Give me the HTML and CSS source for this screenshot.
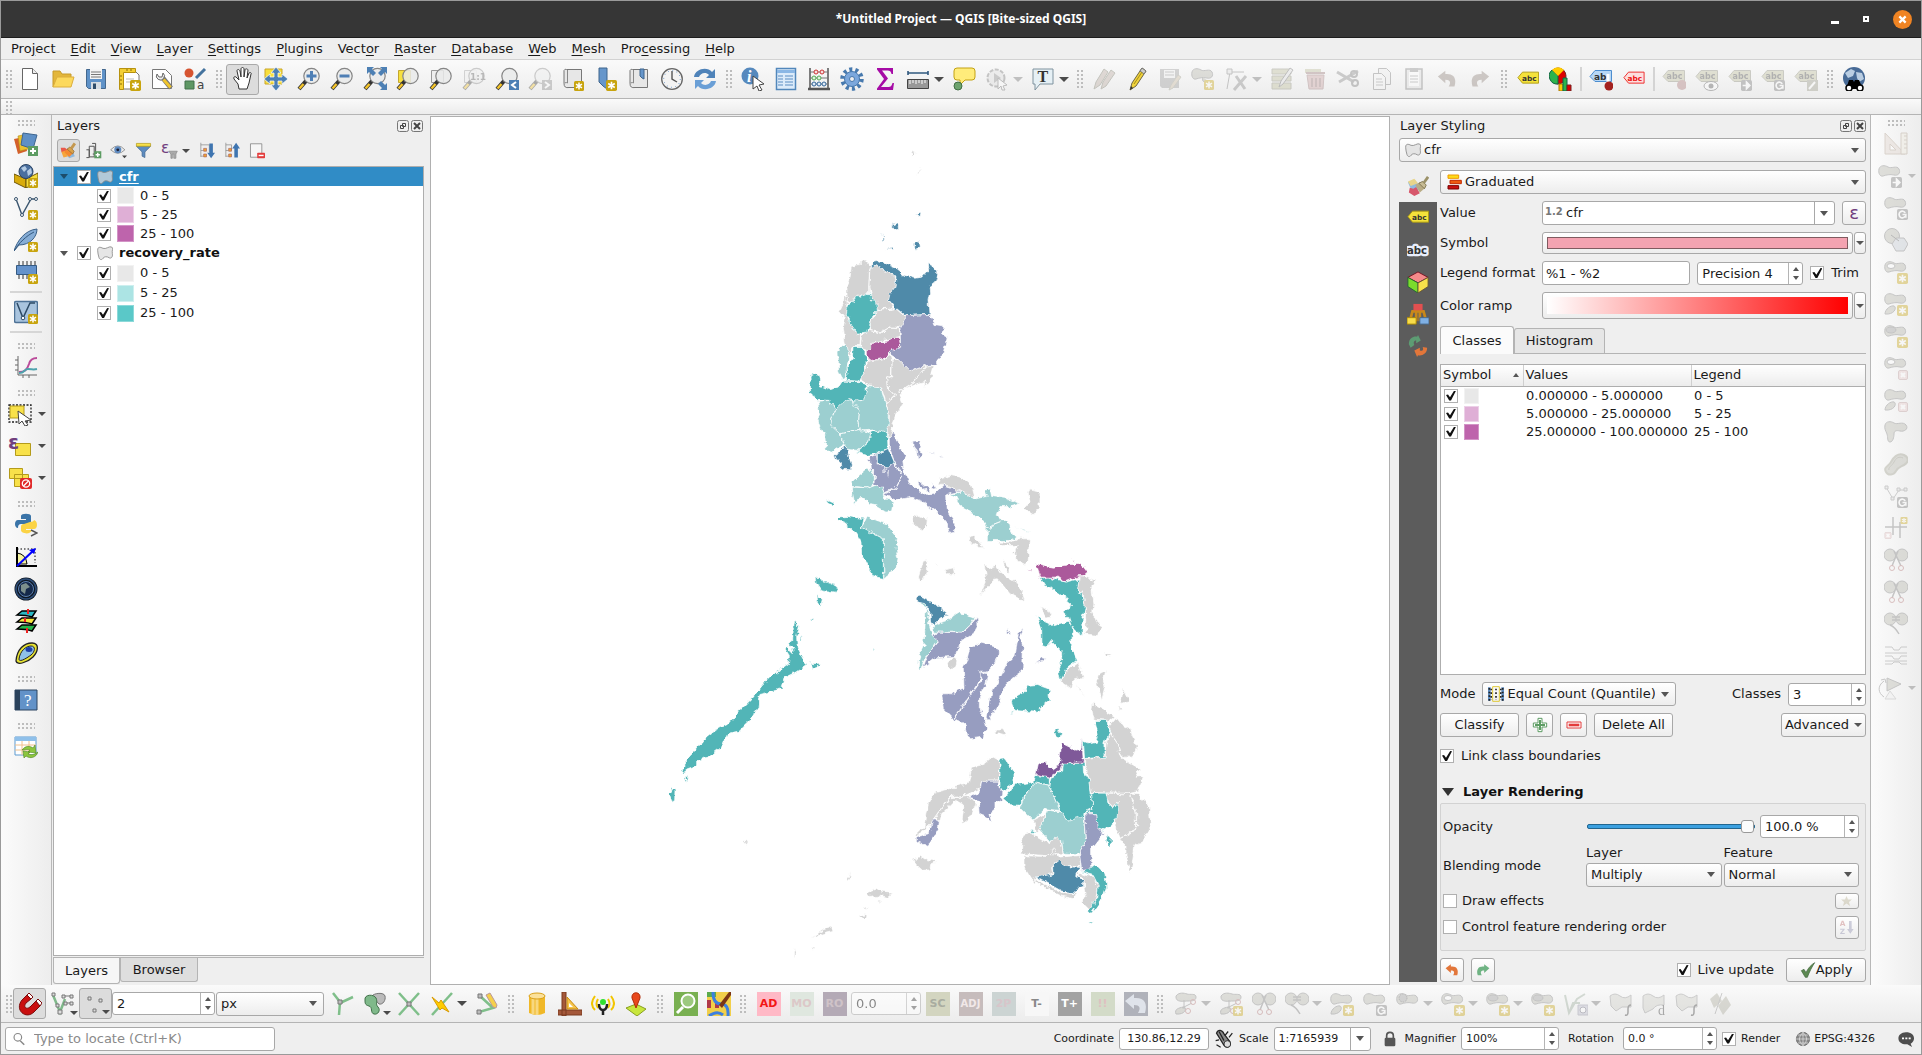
FILE: index.html
```html
<!DOCTYPE html>
<html lang="en">
<head>
<meta charset="utf-8">
<title>*Untitled Project — QGIS [Bite-sized QGIS]</title>
<link rel="stylesheet" href="styles.css">
</head>
<body>
<svg class="sprite" aria-hidden="true">
<symbol id="badge" viewBox="0 0 10 10"><rect width="10" height="10" rx="1.5" fill="#c8a40e"/><path d="M5 1.5v7M2 3.2l6 3.6M8 3.2L2 6.8" stroke="#fff" stroke-width="1.5"/></symbol>
<symbol id="gbadge" viewBox="0 0 10 10"><rect width="10" height="10" rx="1.5" fill="#777"/><path d="M1.500 5h5M5 2l3 3-3 3z" stroke="#fff" stroke-width="1.500" fill="#fff"/></symbol>
<symbol id="rbadge" viewBox="0 0 10 10"><rect width="10" height="10" rx="1.5" fill="#777"/><path d="M7.500 6.500A3 3 0 1 1 7.500 3.500M5 5h3v3" stroke="#fff" stroke-width="1.5" fill="none"/></symbol>
<symbol id="xbadge" viewBox="0 0 10 10"><rect x=".5" y=".5" width="9" height="9" rx="1.5" fill="#e8c9c9" stroke="#b99"/><path d="M3 3l4 4M7 3L3 7" stroke="#fff" stroke-width="2"/></symbol>
<symbol id="new" viewBox="0 0 24 24"><path d="M4.500 1.500h10l5 5v16h-15z" fill="#fff" stroke="#666"/><path d="M14.500 1.500v5h5" fill="#eee" stroke="#666"/></symbol>
<symbol id="open" viewBox="0 0 24 24"><path d="M2 20V4h7l2 3h9v4" fill="#e3b63a" stroke="#c79a2b"/><path d="M2 20L6 10h17l-3 10z" fill="#fcd95d" stroke="#dcae3c"/></symbol>
<symbol id="save" viewBox="0 0 24 24"><path d="M2.500 2.500h19v19h-17l-2-2z" fill="#5f92c8" stroke="#44688e"/><path d="M6 2h12v10H6z" fill="#f4f4f4"/><path d="M7 5h10M7 7.500h10M7 10h10" stroke="#777"/><path d="M7 15h10v7H7z" fill="#d7dde3"/><path d="M9 16.500h3V22H9z" fill="#2f4d6b"/></symbol>
<symbol id="layout" viewBox="0 0 24 24"><path d="M5 3h12l5 5v14H5z" fill="#fff" stroke="#777"/><path d="M2.500 1.500h16v4h-12v17h-4z" fill="#f3cf35" stroke="#b7920f"/><path d="M3 9h2M3 13h2M3 17h2M10 2v2M14 2v2" stroke="#8a6c08"/><path d="M9 12h8M9 15h5" stroke="#bbb"/><use href="#badge" x="13" y="13" width="11" height="11"/></symbol>
<symbol id="manager" viewBox="0 0 24 24"><path d="M2.500 2.500h13l6 6v13h-19z" fill="#fff" stroke="#777"/><path d="M12 10l9 11" stroke="#777" stroke-width="5"/><path d="M13.500 12.500l7 8" stroke="#f0c52d" stroke-width="3"/><path d="M7 7a4 4 0 1 0 6-1l-1 4-3 0z" fill="#eee" stroke="#666"/></symbol>
<symbol id="style" viewBox="0 0 24 24"><circle cx="6" cy="6" r="4.500" fill="#d65431"/><path d="M13 11L22 2" stroke="#44739e" stroke-width="3"/><path d="M2 14h9v8H2z" fill="#5f9764" stroke="#43704a"/><text x="14" y="22" font-family="DejaVu Sans" font-size="12" fill="#444">a</text></symbol>
<symbol id="hand" viewBox="0 0 24 24"><path d="M8 22l-1-5-4-5c-1-2 1-3 2-2l3 3L6 4c0-2 2-2 3 0l1 6V2c0-2 3-2 3 0v8l1-7c0-2 3-1 3 0l-1 8 2-5c1-1 3 0 2 1l-2 9-2 6z" fill="#fff" stroke="#333"/></symbol>
<symbol id="pan" viewBox="0 0 24 24"><path d="M1 2h17v15H1z" fill="#f8df3d" stroke="#c8a62a"/><path d="M12 0l5 6h-3v4h4V7l6 5-6 5v-3h-4v4h3l-5 6-5-6h3v-4H6v3l-6-5 6-5v3h4V6H7z" fill="#4d80b4" stroke="#fff" stroke-width=".7"/></symbol>
<symbol id="mag" viewBox="0 0 24 24"><path d="M9 14L2 22" stroke="#333" stroke-width="4"/><path d="M6.500 17l-4 4.500" stroke="#f5c52a" stroke-width="2.500"/><circle cx="14.500" cy="9" r="7.700" fill="#e9eaea" fill-opacity=".85" stroke="#858585" stroke-width="1.200"/></symbol>
<symbol id="zin" viewBox="0 0 24 24"><use href="#mag"/><path d="M14.500 4v10M9.500 9h10" stroke="#4e7fb5" stroke-width="3"/></symbol>
<symbol id="zout" viewBox="0 0 24 24"><use href="#mag"/><path d="M9.500 9h10" stroke="#4e7fb5" stroke-width="3"/></symbol>
<symbol id="zfull" viewBox="0 0 24 24"><use href="#mag"/><path d="M4 0h7L9 2l4 4-3 3-4-4-2 2zM24 0v7l-2-2-4 4-3-3 4-4-2-2zM24 23h-7l2-2-4-4 3-3 4 4 2-2z" fill="#4d80b4"/></symbol>
<symbol id="zsel" viewBox="0 0 24 24"><path d="M2.500 3.500h12v12h-12z" fill="#f7e13e" stroke="#c4a72e"/><use href="#mag"/></symbol>
<symbol id="zlay" viewBox="0 0 24 24"><path d="M2.500 3.500h12v12h-12z" fill="#eee" stroke="#999"/><use href="#mag"/></symbol>
<symbol id="znat" viewBox="0 0 24 24"><path d="M2.500 3.500h12v12h-12z" fill="#eee" stroke="#999"/><use href="#mag"/><text x="8" y="13" font-family="DejaVu Sans" font-weight="bold" font-size="9" fill="#555">1:1</text></symbol>
<symbol id="zlast" viewBox="0 0 24 24"><use href="#mag"/><path d="M14 13h10v10H14z" fill="#4a7eb4"/><path d="M21 15l-4 3 4 3" stroke="#fff" stroke-width="2" fill="none"/></symbol>
<symbol id="znext" viewBox="0 0 24 24"><use href="#mag"/><path d="M14 13h10v10H14z" fill="#888"/><path d="M17 15l4 3-4 3" stroke="#fff" stroke-width="2" fill="none"/></symbol>
<symbol id="view" viewBox="0 0 24 24"><path d="M5.500 2.500h15v18H8q-5 1-5-4V3.500q1-2 2.500-1z" fill="#e7e7e7" stroke="#777"/><path d="M6.500 3v13q-1-1-3 0" stroke="#888" fill="none"/></symbol>
<symbol id="mapview" viewBox="0 0 24 24"><use href="#view"/><use href="#badge" x="13" y="14" width="10" height="10"/></symbol>
<symbol id="bookmark" viewBox="0 0 24 24"><path d="M5 1h8v21l-4-3-4-4z" fill="#6696cb" stroke="#3e658c"/><use href="#badge" x="12" y="13" width="11" height="11"/></symbol>
<symbol id="bookmarks" viewBox="0 0 24 24"><use href="#view"/><path d="M13 2h4v10l-2-1-2-2z" fill="#6696cb" stroke="#3e658c"/></symbol>
<symbol id="clock" viewBox="0 0 24 24"><circle cx="12" cy="12" r="10.300" fill="#f3f3f3" stroke="#666" stroke-width="1.300"/><path d="M12 4v8l5 3" fill="none" stroke="#555" stroke-width="1.400"/><circle cx="12" cy="12" r="8.300" fill="none" stroke="#6696cb" stroke-dasharray="1 3.340"/></symbol>
<symbol id="refresh" viewBox="0 0 24 24"><path d="M1 10c1-8 13-11 18-5l3-3v9h-9l3-3c-4-4-9-1-10 2z" fill="#4f83b9"/><path d="M23 14c-1 8-13 11-18 5l-3 3v-9h9l-3 3c4 4 9 1 10-2z" fill="#6a9fd6"/></symbol>
<symbol id="info" viewBox="0 0 24 24"><circle cx="9" cy="9" r="8.500" fill="#5689bd"/><text x="6" y="15" font-family="Liberation Serif" font-style="italic" font-weight="bold" font-size="16" fill="#fff">i</text><path d="M12 9l11 8-5 1 3 5-3 1-2-5-4 3z" fill="#fff" stroke="#444"/></symbol>
<symbol id="table" viewBox="0 0 24 24"><path d="M2.500 1.500h19v21h-19z" fill="#dcebfa" stroke="#5287bb" stroke-width="1.500"/><path d="M3 3h18v3H3z" fill="#8bb7e5"/><path d="M4 9h5M11 9h8M4 12h5M11 12h8M4 15h5M11 15h8M4 18h5M11 18h8" stroke="#5b8dc2"/></symbol>
<symbol id="abacus" viewBox="0 0 24 24"><path d="M3 1v21M21 1v21" stroke="#555" stroke-width="1.500"/><path d="M1 22h22" stroke="#555" stroke-width="2.500"/><path d="M3 5h18M3 11h18M3 17h18" stroke="#777"/><g fill="#f6dfdf" stroke="#c33"><circle cx="9" cy="5" r="2"/><circle cx="15" cy="5" r="2"/></g><g fill="#dff3df" stroke="#5a5"><circle cx="7" cy="11" r="2"/><circle cx="12" cy="11" r="2"/></g><g fill="#dfeaf6" stroke="#369"><circle cx="7" cy="17" r="2"/><circle cx="12" cy="17" r="2"/><circle cx="17" cy="17" r="2"/></g></symbol>
<symbol id="gear" viewBox="0 0 24 24"><circle cx="12" cy="12" r="9.500" fill="none" stroke="#4779ae" stroke-width="4.500" stroke-dasharray="3 2.970"/><circle cx="12" cy="12" r="7.500" fill="#7ba7dc" stroke="#4779ae"/><circle cx="12" cy="12" r="2.500" fill="#eee" stroke="#4779ae"/></symbol>
<symbol id="sigma" viewBox="0 0 24 24"><path d="M4 1h16v6h-1.500c-.5-2.500-1.500-3.500-4-3.500H9l6 8-7 8.500h7c3 0 3.500-1 4.500-4H21l-1 7H4v-1.500l7-9.500-7-9.500z" fill="#a60ba6"/></symbol>
<symbol id="measure" viewBox="0 0 24 24"><path d="M2 6h20M2 4v4M22 4v4" stroke="#31597f" stroke-width="1.600"/><path d="M1.500 12.500h21v9h-21z" fill="#999" stroke="#444"/><path d="M4 13v4M7 13v3M10 13v4M13 13v3M16 13v4M19 13v3" stroke="#fff"/></symbol>
<symbol id="tip" viewBox="0 0 24 24"><path d="M5 1h15q3 0 3 3v6q0 3-3 3h-7l-5 5v-5H5q-3 0-3-3V4q0-3 3-3z" fill="#ffec7b" stroke="#c3a112"/><circle cx="6" cy="19" r="4" fill="#6da36e" stroke="#416f44"/></symbol>
<symbol id="action" viewBox="0 0 24 24"><circle cx="11" cy="11" r="8.500" fill="#ddd" stroke="#777" stroke-width="2" stroke-dasharray="4 1.500"/><path d="M9 6l7 5-7 5z" fill="#888"/><path d="M13 11l9 7-4 1 2 4-3 0-1-4-3 3z" fill="#fff" stroke="#666"/></symbol>
<symbol id="textnote" viewBox="0 0 24 24"><path d="M2 2h20v15h-13l-5 6v-6H2z" fill="#e6f0f5" stroke="#7e929e"/><text x="6.500" y="15" font-family="Liberation Serif" font-weight="bold" font-size="16" fill="#333">T</text></symbol>
<symbol id="pencil" viewBox="0 0 24 24"><path d="M5 23l2-7L17 1l4 3L11 19z" fill="#f0d33c" stroke="#6d6545"/><path d="M17 1l4 3-2 3-4-3z" fill="#ccc" stroke="#777"/><path d="M5 23l1-4 2 2z" fill="#333"/><path d="M9 17l8-12" stroke="#a68d16"/></symbol>
<symbol id="pencils" viewBox="0 0 24 24"><path d="M2 22l2-7L12 2l4 3L8 18z" fill="#b9a99f" stroke="#776"/><path d="M9 22l2-7 8-12 4 3-9 13z" fill="#b9a99f" stroke="#776"/></symbol>
<symbol id="saveed" viewBox="0 0 24 24"><path d="M2 2h19v19H4l-2-2z" fill="#999"/><path d="M6 3h11v8H6z" fill="#eee"/><path d="M7 5h9M7 8h9" stroke="#888"/><path d="M11 23l2-5 7-10 3 2-8 11z" fill="#c9b9a0" stroke="#998"/></symbol>
<symbol id="blob" viewBox="0 0 24 24"><path d="M1 5c1-4 6-4 9-2s9-2 11 2-1 7-5 6-8 0-11 1-5-3-4-7z" fill="#b5b5aa" stroke="#777"/></symbol>
<symbol id="addpoly" viewBox="0 0 24 24"><use href="#blob"/><path d="M12 10c-2 4 2 7 5 4" fill="#b5b5aa" stroke="#777"/><use href="#badge" x="13" y="13" width="10" height="10"/></symbol>
<symbol id="vertex" viewBox="0 0 24 24"><path d="M3 22L6 5h14" fill="none" stroke="#777"/><path d="M3 2h5v5H3z" fill="#ddd" stroke="#777"/><path d="M10 23L22 9M12 9l9 13" stroke="#888" stroke-width="3"/></symbol>
<symbol id="modify" viewBox="0 0 24 24"><path d="M2 2h19v5H2zM2 9h19v5H2zM2 16h19v6H2z" fill="#bcbc98" stroke="#887"/><path d="M9 20l2-6L20 1l3 2L13 17z" fill="#ddd" stroke="#666"/></symbol>
<symbol id="trash" viewBox="0 0 24 24"><path d="M2 2h16v4H2z" fill="#bcbc98"/><path d="M4 8h17l-1 14H6z" fill="#c9a0a0" stroke="#977"/><path d="M3 6h19M9 11v9M13 11v9M17 11v9" stroke="#977" stroke-width="2"/></symbol>
<symbol id="cut" viewBox="0 0 24 24"><path d="M1 5l17 10M3 15L22 4" stroke="#888" stroke-width="3"/><circle cx="19" cy="16" r="3" fill="none" stroke="#777" stroke-width="2"/><circle cx="18" cy="7" r="3" fill="none" stroke="#777" stroke-width="2"/></symbol>
<symbol id="copy" viewBox="0 0 24 24"><path d="M9.500 1.500h8l4 4v12h-12z" fill="#eee" stroke="#777"/><path d="M4.500 6.500h8l4 4v12h-12z" fill="#f4f4f4" stroke="#777"/><path d="M7 12h6M7 15h7M7 18h7" stroke="#888"/></symbol>
<symbol id="paste" viewBox="0 0 24 24"><path d="M4 2h16v20H4z" fill="#ddd" stroke="#777" stroke-width="1.500"/><path d="M7 5h10v14H7z" fill="#fff"/><path d="M8 1h8v4H8z" fill="#888"/><path d="M8 9h8M8 12h8M8 15h8" stroke="#888"/></symbol>
<symbol id="undo" viewBox="0 0 24 24"><path d="M1 9l9-7v4c10-1 14 5 11 15h-7c3-5 2-8-4-8v4z" fill="currentColor"/></symbol>
<symbol id="redo" viewBox="0 0 24 24"><path d="M23 9l-9-7v4C4 5 0 11 3 21h7c-3-5-2-8 4-8v4z" fill="currentColor"/></symbol>
<symbol id="label" viewBox="0 0 24 24"><path d="M6 4.500h17.500v12H6l-5-6z" fill="#f4e23b" stroke="#ae9a10"/><text x="5.500" y="14" font-family="DejaVu Sans" font-weight="bold" font-size="8" fill="#333">abc</text></symbol>
<symbol id="labelg" viewBox="0 0 24 24"><path d="M6 3.500h16.500v11H6l-5-5z" fill="#bcbc98" stroke="#887"/><text x="4.500" y="12" font-family="DejaVu Sans" font-weight="bold" font-size="8" fill="#444">abc</text></symbol>
<symbol id="pie" viewBox="0 0 24 24"><circle cx="9" cy="9" r="8" fill="#d00" stroke="#722"/><path d="M9 9L3 3a8 8 0 0 0 6 14z" fill="#2cb34d" stroke="#164"/><path d="M9 9L3 3a8 8 0 0 1 12 0z" fill="#fc0"/><path d="M10 17h4v7h-4z" fill="#fc0" stroke="#a70"/><path d="M14 11h4v13h-4z" fill="#2cb34d" stroke="#164"/><path d="M18 18h4v6h-4z" fill="#d00" stroke="#722"/></symbol>
<symbol id="labelpin" viewBox="0 0 24 24"><path d="M6 3.500h16.500v11H6l-5-5z" fill="#b7d7f5" stroke="#4d8dcf"/><text x="5" y="13" font-family="DejaVu Sans" font-weight="bold" font-size="9" fill="#333">ab</text><path d="M19 7v9" stroke="#fff" stroke-width="3"/><circle cx="20" cy="19" r="4.500" fill="#a3211f"/></symbol>
<symbol id="labelred" viewBox="0 0 24 24"><path d="M6 4.500h17v12H6l-5-6z" fill="#fcdede" stroke="#e22"/><text x="5" y="14" font-family="DejaVu Sans" font-weight="bold" font-size="8" fill="#e11">abc</text></symbol>
<symbol id="lg1" viewBox="0 0 24 24"><use href="#labelg"/><circle cx="20" cy="18" r="5" fill="#a77"/></symbol>
<symbol id="lg2" viewBox="0 0 24 24"><use href="#labelg"/><ellipse cx="16" cy="19" rx="7" ry="4.500" fill="#fff" stroke="#555"/><circle cx="16" cy="19" r="2.500" fill="#555"/></symbol>
<symbol id="lg3" viewBox="0 0 24 24"><use href="#labelg"/><use href="#gbadge" x="13" y="13" width="11" height="11"/></symbol>
<symbol id="lg4" viewBox="0 0 24 24"><use href="#labelg"/><use href="#rbadge" x="13" y="13" width="11" height="11"/></symbol>
<symbol id="lg5" viewBox="0 0 24 24"><use href="#labelg"/><path d="M13 13h11v11H13z" fill="#998"/><path d="M15 22l6-7" stroke="#fff" stroke-width="2"/></symbol>
<symbol id="osm" viewBox="0 0 24 24"><circle cx="12" cy="11" r="11" fill="#476a96"/><path d="M3 6l6-4 4 2-2 5-5 2zM14 5l6 1 2 6-5 3-2-4z" fill="#b9cde2"/><path d="M4 22l3-9h4l1 2 1-2h4l4 9z" fill="#000"/><circle cx="7" cy="21" r="3" fill="#fff" stroke="#000" stroke-width="1.500"/><circle cx="18" cy="21" r="3" fill="#fff" stroke="#000" stroke-width="1.500"/></symbol>
<symbol id="sources" viewBox="0 0 24 24"><path d="M0 7l10 -2 3 14-9 3z" fill="#d4602b"/><path d="M4 4l9-2 5 14-12 3z" fill="#ecc22e" stroke="#b0881a" stroke-width=".6"/><path d="M9 1l14 2-4 14-12-4z" fill="#5f90c6" stroke="#3d658f"/><path d="M14 14h10v10H14z" fill="#5d9c63"/><path d="M19 16v6M16 19h6" stroke="#fff" stroke-width="2"/></symbol>
<symbol id="gpkg" viewBox="0 0 24 24"><path d="M0 10l12 5v9L0 18z" fill="#d9ab0c" stroke="#6d560a"/><path d="M24 9l-12 6v9l12-6z" fill="#f6dd3c" stroke="#6d560a"/><circle cx="12" cy="7.500" r="7" fill="#4a6f9f" stroke="#2b4362"/><path d="M7 4l4-2 2 3-3 3zM13 7l4-3 1 5-4 3z" fill="#b4cbe3"/><use href="#badge" x="14" y="14" width="10" height="10"/></symbol>
<symbol id="shp" viewBox="0 0 24 24"><path d="M2 3l6 16L17 3h5" fill="none" stroke="#3b566f" stroke-width="1.400"/><g fill="#fff" stroke="#3b566f"><circle cx="2" cy="3" r="1.500"/><circle cx="8" cy="19" r="1.500"/><circle cx="16" cy="3" r="1.500"/><circle cx="22" cy="3" r="1.500"/></g><use href="#badge" x="14" y="14" width="10" height="10"/></symbol>
<symbol id="feather" viewBox="0 0 24 24"><path d="M0 23C3 13 11 2 23 1c0 8-7 16-18 16z" fill="#86add6" stroke="#3b6087"/><path d="M0 23C5 15 12 8 20 4" stroke="#34597f" fill="none"/><use href="#badge" x="14" y="14" width="10" height="10"/></symbol>
<symbol id="chip" viewBox="0 0 24 24"><path d="M5 1v18M9 1v18M13 1v18M17 1v18M21 1v18" stroke="#333"/><path d="M2.500 5.500h20v9h-20z" fill="#6492cb" stroke="#355a82"/><use href="#badge" x="14" y="14" width="10" height="10"/></symbol>
<symbol id="virt" viewBox="0 0 24 24"><rect x=".5" y="1.500" width="23" height="21" rx="1.500" fill="#a9c4de" stroke="#4e7296" stroke-width="1.500"/><path d="M3 3l6 15L16 3h5" fill="none" stroke="#2e4b66" stroke-width="1.500"/><circle cx="9" cy="18" r="1.800" fill="#fff" stroke="#2e4b66"/><use href="#badge" x="14" y="14" width="10" height="10"/></symbol>
<symbol id="plot" viewBox="0 0 24 24"><path d="M4 1v19h19M1 5h3M1 10h3M1 15h3M9 20v3M15 20v3" stroke="#666" fill="none"/><path d="M5 17c6 0 8-2 10-8 1-4 3-6 8-6" stroke="#bb4b9a" stroke-width="2" fill="none"/><path d="M5 18c6 0 5-4 9-4s5 1 9 0" stroke="#4ea2ac" stroke-width="2" fill="none"/></symbol>
<symbol id="select" viewBox="0 0 24 24"><path d="M1 3h22v17H1z" fill="none" stroke="#222" stroke-width="1.300" stroke-dasharray="2 1.500"/><path d="M2 4h14v12H2z" fill="#f8e14a" stroke="#b49b1b"/><path d="M10 9l13 9-6 1 3 4-3 1-3-5-3 3z" fill="#fff" stroke="#444"/></symbol>
<symbol id="selexp" viewBox="0 0 24 24"><path d="M7.500 9.500h15v12h-15z" fill="#f8e14a" stroke="#b49b1b"/><text x="0" y="15" font-family="DejaVu Sans" font-weight="bold" font-size="20" fill="#70407e">ε</text></symbol>
<symbol id="desel" viewBox="0 0 24 24"><path d="M1.500 2.500h13v10h-13zM6.500 8.500h14v12h-14z" fill="#f8e14a" stroke="#b49b1b"/><rect x="12" y="12" width="12" height="11" rx="2" fill="#e02a2a"/><circle cx="18" cy="17.500" r="3.700" fill="none" stroke="#fff" stroke-width="1.300"/><path d="M15.500 20l5-5" stroke="#fff" stroke-width="1.300"/></symbol>
<symbol id="python" viewBox="0 0 24 24"><path d="M7 11c-2 0-3 1-3 4-4 0-4-8 0-8h8V6H7V3c0-3 10-3 10 0v5c0 3-2 3-3 3z" fill="#3a74a8"/><path d="M16 9c2 0 4-1 4-2 4 1 4 9 0 9h-8v1h6c-1 5-11 4-11 0v-3c0-3 2-3 3-3z" fill="#fbd345"/><path d="M17 17l6 3-6 3" stroke="#555" stroke-width="1.500" fill="none"/></symbol>
<symbol id="angle" viewBox="0 0 24 24"><path d="M3 4h18v14" stroke="#000" stroke-dasharray="1.500 2" fill="none"/><path d="M3 8q9 1 10 11H3z" fill="#f6f4a0" stroke="#000"/><path d="M3 2v19h20" stroke="#000" stroke-width="2" fill="none"/><path d="M3 21L20 5" stroke="#00f" stroke-width="2"/><path d="M22 3l-7 2 5 4z" fill="#00f"/></symbol>
<symbol id="globe" viewBox="0 0 24 24"><circle cx="12" cy="12" r="11.500" fill="#0e1722"/><circle cx="12" cy="12" r="10" fill="none" stroke="#2d4d78" stroke-width="1.500"/><circle cx="12" cy="12" r="7.500" fill="#15294a" stroke="#5b80b0"/><path d="M7 8l5-2 4 4-4 2-1 5-4-3z" fill="#7c8f8c"/></symbol>
<symbol id="stack" viewBox="0 0 24 24"><path d="M3 6l5-4h14l-4 6q-6-2-15-2z" fill="#2bb8c4" stroke="#000" stroke-width="1.500"/><path d="M3 13l5-4h14l-4 6q-6-2-15-2z" fill="#f5e63c" stroke="#000" stroke-width="1.500"/><path d="M3 20l5-4h14l-4 6q-6-2-15-2z" fill="#28b44a" stroke="#000" stroke-width="1.500"/><path d="M14 0v5M11 9v4M13 19v5" stroke="#e22" stroke-width="2"/></symbol>
<symbol id="tear" viewBox="0 0 24 24"><path d="M2 20C3 8 10 2 18 2s6 9 1 14-16 9-17 4z" fill="#e6e232" stroke="#222" stroke-width="1.300"/><path d="M5 18C6 10 12 5 17 5s4 6 0 9-12 8-12 4z" fill="#8fc2ea" stroke="#222"/><ellipse cx="15" cy="8.500" rx="3.500" ry="2.500" fill="#1d3faa"/></symbol>
<symbol id="help" viewBox="0 0 24 24"><path d="M1 2h22v20H1z" fill="#6292c8" stroke="#2c4561"/><path d="M1 2h5v20H1z" fill="#2a425b"/><text x="10" y="18" font-family="Liberation Serif" font-size="17" fill="#fff">?</text></symbol>
<symbol id="tblref" viewBox="0 0 24 24"><path d="M1 2h21v18H1z" fill="#fff" stroke="#5c9bd1"/><path d="M1 2h21v4H1z" fill="#8fc0ea"/><path d="M1 10h21M1 15h21M8 6v14M15 6v14" stroke="#f0c08c"/><path d="M8 15c4-5 8-4 11-2l2-3 1 8-8-1 2-2c-3-1-5 0-8 0zM24 17c-2 6-8 7-12 4l-2 2-1-7 7 1-2 2c3 1 6 1 10-2z" fill="#8cc63e" stroke="#4f8621" stroke-width=".6"/></symbol>
<symbol id="brush" viewBox="0 0 24 24"><path d="M1 8l8-2 5 6-3 9-6-4z" fill="#8fb9e0"/><path d="M1 7l7-3 4 5-8 3z" fill="#e8d48a"/><path d="M3 14l4 1 3-2 4 7-6 3-6-4z" fill="#d7576b"/><path d="M9 11l5-3 6 6-6 5z" fill="#b9ac85"/><path d="M13 9l4-2 4 4-2 4z" fill="#c7bb94" stroke="#7d7450"/><path d="M18 9l5-7" stroke="#9b9168" stroke-width="3"/></symbol>
<symbol id="brusho" viewBox="0 0 24 24"><path d="M1 8l6 0 5 4-5 5-5-3z" fill="#e8584a"/><path d="M2 14l6-2 4 8-7 2z" fill="#f7a53a"/><path d="M10 19l9-3 2 4-8 3z" fill="#8fb9e0"/><path d="M6 14l5-5 8 6-6 6z" fill="#f4892f"/><path d="M10 10l4-3 6 6-2 4z" fill="#d9a24a" stroke="#8a6938"/><path d="M16 9l5-7" stroke="#c4984f" stroke-width="4"/></symbol>
<symbol id="addgrp" viewBox="0 0 24 24"><path d="M2 11h4v11H2M6 6h7v15H6zM10 2h5v15h-4" fill="none" stroke="#555" stroke-width="1.400"/><path d="M13 13h10v10H13z" fill="#5d9c63"/><path d="M18 15v6M15 18h6" stroke="#fff" stroke-width="2"/></symbol>
<symbol id="eye" viewBox="0 0 24 24"><path d="M1 11q10-11 20 0-10 10-20 0z" fill="#eee" stroke="#777"/><circle cx="11" cy="11" r="5" fill="#5f8bc0"/><circle cx="11" cy="11" r="2" fill="#223"/><path d="M17 19h7l-3.500 4z" fill="#444"/></symbol>
<symbol id="funnel" viewBox="0 0 24 24"><path d="M2 6h20l-8 8v8l-4-2v-6z" fill="#5d8cc0" stroke="#41678f"/><path d="M2 2h20v4H2z" fill="#f8e14a" stroke="#b49b1b"/></symbol>
<symbol id="epsf" viewBox="0 0 24 24"><text x="0" y="16" font-family="DejaVu Sans" font-size="22" fill="#70407e">ε</text><path d="M11 13h12l-2 4v6h-3v-6h-2v6h-2v-6z" fill="#aaa" stroke="#888"/></symbol>
<symbol id="expand" viewBox="0 0 24 24"><path d="M4 1v20M4 4h12v10M4 12h4M4 20h4" stroke="#888" fill="none"/><path d="M8 9h4v4H8zM8 17h4v4H8z" fill="#f2a62a" stroke="#a66"/><path d="M16 2h5v13h3l-5.500 8-5.500-8h3z" fill="#3f75b0"/></symbol>
<symbol id="collapse" viewBox="0 0 24 24"><path d="M4 1v20M4 4h8v8M4 12h4M4 20h4" stroke="#888" fill="none"/><path d="M8 9h4v4H8zM8 17h4v4H8z" fill="#f2a62a" stroke="#a66"/><path d="M16 22h5V9h3l-5.500-8-5.500 8h3z" fill="#3f75b0"/></symbol>
<symbol id="remove" viewBox="0 0 24 24"><path d="M3.500 2.500h16v19h-16z" fill="#f6f6f6" stroke="#777"/><rect x="13" y="15" width="11" height="8" rx="1" fill="#e33c3c"/><path d="M15 19h7" stroke="#fff" stroke-width="2"/></symbol>
<symbol id="poly" viewBox="0 0 24 24"><path d="M1 8c0-6 4-5 8-3s10-4 13-2 0 5 1 10-2 8-5 6-7-2-9 1-5 2-6-1-2-8-2-11z" fill="#ddd" fill-opacity=".75" stroke="#8b8b8b" stroke-width="1.300"/></symbol>
<symbol id="float" viewBox="0 0 12 12"><rect x=".5" y=".5" width="11" height="11" rx="2" fill="none" stroke="#777"/><path d="M5.500 3.500h3v3h-3zM3.500 5.500h3v3h-3z" fill="#eee" stroke="#444"/></symbol>
<symbol id="close" viewBox="0 0 12 12"><rect x=".5" y=".5" width="11" height="11" rx="2" fill="none" stroke="#777"/><path d="M3 3l6 6M9 3L3 9" stroke="#444" stroke-width="2"/></symbol>
<symbol id="cube" viewBox="0 0 24 24"><path d="M12 1l11 6-11 6L1 7z" fill="#f58a8a" stroke="#712"/><path d="M1 7l11 6v11L1 17z" fill="#7bdc2c" stroke="#263"/><path d="M23 7l-11 6v11l11-7z" fill="#f8e14a" stroke="#653"/></symbol>
<symbol id="abct" viewBox="0 0 24 24"><text x="0" y="16" font-family="DejaVu Sans" font-weight="bold" font-size="11" fill="#333" stroke="#e9eefb" stroke-width="5" paint-order="stroke" stroke-linejoin="round">abc</text></symbol>
<symbol id="forms" viewBox="0 0 24 24"><path d="M3 20L6 9h12l3 11M10 8v12M14 8v12" stroke="#c9881a" stroke-width="3" fill="none"/><path d="M7 1h10v7H7z" fill="#e25050"/><path d="M0 16h10v7H0z" fill="#f8dd4a" stroke="#a80"/><path d="M14 16h10v7H14z" fill="#7fb0e4" stroke="#468"/></symbol>
<symbol id="hist" viewBox="0 0 24 24"><path d="M2 10c0-7 6-9 9-8l1-2 3 6-5 3 0-3c-3 0-3 3-2 5l-4 3z" fill="#5d9c73"/><path d="M22 14c0 7-6 9-10 8l-1 2-3-7 6-3v3c4 1 4-2 3-4z" fill="#e2763a"/></symbol>
<symbol id="grad" viewBox="0 0 24 24"><path d="M3 1.500h16v5H3z" fill="#fddc1a" stroke="#f09a00" stroke-width="1.500"/><path d="M6 9.500h17v5H6z" fill="#ee5a10" stroke="#c22a00" stroke-width="1.500"/><path d="M3 17.500h16v5H3z" fill="#c11" stroke="#700" stroke-width="1.500"/></symbol>
<symbol id="quant" viewBox="0 0 24 24"><path d="M2 2v20M22 2v20" stroke="#5d8cc0" stroke-width="4"/><path d="M2 3v20M22 3v20M12 4v17M5 4v17M19 4v17" stroke="#222" stroke-width="2.500" stroke-dasharray="2.500 3"/><path d="M7 1h10v22H7z" fill="none" stroke="#dfc93a" stroke-width="1.500"/></symbol>
<symbol id="plus" viewBox="0 0 24 24"><path d="M9 2h6v7h7v6h-7v7H9v-7H2V9h7z" fill="#fff" stroke="#5d9c63" stroke-width="1.500"/><path d="M12 4.500v15M4.500 12h15" stroke="#5d9c63" stroke-width="3"/></symbol>
<symbol id="minus" viewBox="0 0 24 24"><path d="M1.500 7.500h21v9h-21z" fill="#fff" stroke="#e33c3c" stroke-width="1.500"/><path d="M4 12h16" stroke="#e33c3c" stroke-width="4"/></symbol>
<symbol id="tick" viewBox="0 0 24 24"><path d="M2 13l4-2 3 5C12 9 17 4 22 1c-4 6-8 14-11 22H8z" fill="#5d8a52" stroke="#3b6138"/></symbol>
<symbol id="star" viewBox="0 0 24 24"><path d="M11 2l3 7h8l-6 5 2 8-7-5-7 5 2-8-6-5h8z" fill="#b3ab8a"/></symbol>
<symbol id="sort" viewBox="0 0 24 24"><text x="1" y="11" font-family="DejaVu Sans" font-weight="bold" font-size="11" fill="#b66">A</text><text x="1" y="23" font-family="DejaVu Sans" font-weight="bold" font-size="11" fill="#88a">Z</text><path d="M15 3h4v12h3l-5 7-5-7h3z" fill="#88a"/></symbol>
<symbol id="setsq" viewBox="0 0 24 24"><path d="M1 1l20 21H1z" fill="#ddd0c8" stroke="#a98"/><path d="M6 12l6 6H6z" fill="#fff" stroke="#a98"/><path d="M17 1h6v21h-6z" fill="#eeeadb" stroke="#a98"/><path d="M20 4h3M20 8h3M20 12h3M20 16h3" stroke="#a98"/></symbol>
<symbol id="r1" viewBox="0 0 24 24"><use href="#blob"/><use href="#gbadge" x="13" y="13" width="11" height="11"/></symbol>
<symbol id="r2" viewBox="0 0 24 24"><use href="#blob"/><use href="#rbadge" x="13" y="13" width="11" height="11"/></symbol>
<symbol id="r3" viewBox="0 0 24 24"><circle cx="8" cy="8" r="7.500" fill="#b5b5aa" stroke="#777"/><path d="M12 10h8l4 6-4 7h-8l-4-7z" fill="#c5ccd5" stroke="#777"/><path d="M7 7l8 6" stroke="#555"/></symbol>
<symbol id="r4" viewBox="0 0 24 24"><use href="#blob"/><ellipse cx="7" cy="6" rx="4" ry="2.500" fill="#fff" stroke="#777"/><use href="#badge" x="13" y="13" width="11" height="11"/></symbol>
<symbol id="r5" viewBox="0 0 24 24"><use href="#blob"/><path d="M1 22c0-5 6-9 9-8s1 9-9 8z" fill="#b5b5aa" stroke="#777"/><use href="#badge" x="13" y="13" width="11" height="11"/></symbol>
<symbol id="r6" viewBox="0 0 24 24"><use href="#blob"/><ellipse cx="7" cy="6" rx="5" ry="3" fill="#999" stroke="#777"/><use href="#badge" x="13" y="13" width="11" height="11"/></symbol>
<symbol id="r7" viewBox="0 0 24 24"><use href="#blob"/><ellipse cx="7" cy="6" rx="4" ry="2.500" fill="#fff" stroke="#777"/><use href="#xbadge" x="14" y="14" width="10" height="10"/></symbol>
<symbol id="r8" viewBox="0 0 24 24"><use href="#blob"/><path d="M1 22c0-5 6-9 9-8s1 9-9 8z" fill="#b5b5aa" stroke="#777"/><use href="#xbadge" x="14" y="14" width="10" height="10"/></symbol>
<symbol id="r9" viewBox="0 0 24 24"><path d="M1 5c1-4 6-4 9-2s9-2 12 2-2 7-6 6-6 0-6 3-1 8-4 8-2-5-3-8-3-5-2-9z" fill="#b5b5aa" stroke="#777"/></symbol>
<symbol id="r10" viewBox="0 0 24 24"><path d="M2 20c-3-5 3-6 5-10s7-10 13-7 4 8 0 10-6 2-8 6-8 5-10 1z" fill="#b5b5aa" stroke="#998" stroke-width="2"/><path d="M5 18c-1-3 3-4 5-8s5-6 9-4" stroke="#887" fill="none"/></symbol>
<symbol id="r11" viewBox="0 0 24 24"><path d="M2 3l7 12 6-9h7" stroke="#888" fill="none"/><path d="M1 2h3v3H1zM7 13h3v3H7zM13 4h3v3h-3zM20 4h3v3h-3z" fill="#ddd" stroke="#888"/><use href="#rbadge" x="13" y="13" width="11" height="11"/></symbol>
<symbol id="r12" viewBox="0 0 24 24"><path d="M1 11h22M9 1v18M16 6v16" stroke="#777" stroke-width="1.500"/><use href="#xbadge" x="0" y="16" width="8" height="7"/><use href="#badge" x="16" y="1" width="8" height="7"/></symbol>
<symbol id="r13" viewBox="0 0 24 24"><circle cx="6" cy="7" r="6" fill="#b5b5aa" stroke="#777"/><circle cx="18" cy="7" r="6" fill="#b5b5aa" stroke="#777"/><path d="M10 3l7 15M14 3L8 18" stroke="#777" stroke-width="1.500"/><circle cx="8" cy="20" r="2.500" fill="none" stroke="#a66"/><circle cx="17" cy="20" r="2.500" fill="none" stroke="#a66"/></symbol>
<symbol id="r14" viewBox="0 0 24 24"><circle cx="6" cy="7" r="6" fill="#b5b5aa" stroke="#777"/><circle cx="18" cy="7" r="6" fill="#b5b5aa" stroke="#777"/><path d="M8 5h8M8 8h8M6 13q5 2 9 9" stroke="#777" stroke-width="1.500" fill="none"/></symbol>
<symbol id="r15" viewBox="0 0 24 24"><path d="M1 3h7l2 3h5l2-3h6M1 9h22M1 12h7l2 3h5l2-3h6M1 17h22M1 20h7l2-2h5l2 2h6" stroke="#888" fill="none"/></symbol>
<symbol id="r16" viewBox="0 0 24 24"><path d="M9 2l14 6-14 7z" fill="#b5b5aa" stroke="#777"/><path d="M6 5c-7 5-6 12 0 16M3 4l4-1 1 4" stroke="#777" fill="none"/><path d="M12 15l6 8H7z" fill="#eee" stroke="#aaa"/></symbol>
<symbol id="magnet" viewBox="0 0 24 24"><path d="M9 3l-5 5C-4 18 8 28 16 20l6-6-4-5-6 6c-4 3-7 0-4-4l5-4z" fill="#c90f0f" stroke="#7d0b0b"/><path d="M9 3l4 4 2-2-4-4zM18 9l4 5 2-3-4-4z" fill="#fff" stroke="#7d0b0b"/></symbol>
<symbol id="snapv" viewBox="0 0 24 24"><path d="M2 3l7 17 5-13" stroke="#7fb98a" stroke-width="2.500" fill="none"/><g fill="#ddd" stroke="#777"><path d="M1 1h3v3H1zM5 12h3v3H5zM7 18h4v4H7zM11 3h3v3h-3zM19 3h3v3h-3zM13 10h3v3h-3zM19 10h3v3h-3z"/></g><path d="M14 4h5M16 11h3" stroke="#777"/></symbol>
<symbol id="pts" viewBox="0 0 24 24"><path d="M4 5h3v3H4zM15 7h3v3h-3zM9 17h3v3H9z" fill="#ddd" stroke="#777"/></symbol>
<symbol id="topo" viewBox="0 0 24 24"><path d="M2 1l7 9-1 13M9 11L22 5" stroke="#7fbf8a" stroke-width="2.500" fill="none"/><path d="M7 8h4v4H7z" fill="#bbb" stroke="#777"/></symbol>
<symbol id="foot" viewBox="0 0 24 24"><path d="M8 4c2-3 12-4 13 0s-2 9-6 8z" fill="#bbb" stroke="#777"/><path d="M1 8c-1-6 9-6 11-2s-1 6 2 9 0 8-4 7-1-7-5-8-4-3-4-6z" fill="#7fb98a" stroke="#3f7048"/></symbol>
<symbol id="inter" viewBox="0 0 24 24"><path d="M2 1l20 22M22 1L2 23" stroke="#7fbf8a" stroke-width="2.500"/><path d="M10 10h4v4h-4z" fill="#bbb" stroke="#777"/></symbol>
<symbol id="bolt" viewBox="0 0 24 24"><path d="M2 23L22 1" stroke="#7fbf8a" stroke-width="2.500"/><path d="M2 5l7 6 2-3 8 12-7-4-2 2z" fill="#fc0" stroke="#d99a00"/></symbol>
<symbol id="trace" viewBox="0 0 24 24"><path d="M4 20L18 16 5 4" stroke="#7fbf8a" stroke-width="2.500" fill="none"/><path d="M3 2h4v4H3zM2 18h4v4H2z" fill="#bbb" stroke="#777"/><path d="M11 3l4-2 7 12-1 3-3-1z" fill="#f5d04a" stroke="#b99"/></symbol>
<symbol id="db" viewBox="0 0 24 24"><path d="M4 4v17q8 4 16 0V4z" fill="#f0b828"/><path d="M8 4v18M12 4v19" stroke="#f8d880" stroke-width="3"/><ellipse cx="12" cy="4" rx="8" ry="3" fill="#fbe19a" stroke="#d9a01a"/></symbol>
<symbol id="ruler" viewBox="0 0 24 24"><path d="M4 0h4v24H4zM0 18h24v5H0z" fill="#a4583a" stroke="#7a3b20"/><path d="M9 5l11 12H9z" fill="#f5c44a" stroke="#c98a10"/><path d="M11 11l4 4h-4z" fill="#fff"/></symbol>
<symbol id="antenna" viewBox="0 0 24 24"><path d="M4 4q-6 8 0 14M20 4q6 8 0 14M7 7q-3 5 0 9M17 7q3 5 0 9" stroke="#f2c500" stroke-width="2" fill="none"/><path d="M8 12q0 6 4 6t4-6M12 17v6" stroke="#222" stroke-width="2.500" fill="none"/><circle cx="12" cy="10" r="3" fill="#2fe02f"/></symbol>
<symbol id="pin" viewBox="0 0 24 24"><path d="M2 16l10-4 10 5-9 7z" fill="#c8e63c" stroke="#88a020"/><path d="M12 16L8 6c-1-7 9-7 8 0z" fill="#e8481c" stroke="#b02c08"/></symbol>
<symbol id="search" viewBox="0 0 24 24"><path d="M0 0h24v24H0z" fill="#79b051"/><circle cx="14" cy="9" r="6.500" fill="#9cc97e" stroke="#fff" stroke-width="2"/><path d="M9 15l-6 6" stroke="#fff" stroke-width="3"/></symbol>
<symbol id="paint" viewBox="0 0 24 24"><path d="M0 0h24v24H0z" fill="#f2cf4a"/><path d="M0 0h9v5H0z" fill="#5cab4c"/><path d="M0 8h4v8H0zM8 10h4v6H8z" fill="#b03a4a"/><path d="M6 0q0 12 8 12t7 12M2 24q8-6 14-1" stroke="#3d7fe0" stroke-width="3" fill="none"/><path d="M12 13L22 0h2v3L15 16z" fill="#7b3514"/></symbol>
<symbol id="adv1" viewBox="0 0 24 24"><path d="M2 4c3-4 8-3 11-2s9-1 9 3-4 4-8 4-13 2-12-5z" fill="#b5b5aa" stroke="#777"/><path d="M2 22c-2-5 3-6 7-7s4 8-7 7zM10 8v9M8 16l10-5" fill="#b5b5aa" stroke="#777"/><circle cx="19" cy="10" r="2.500" fill="none" stroke="#a66"/><circle cx="14" cy="19" r="2.500" fill="none" stroke="#a66"/></symbol>
<symbol id="adv2" viewBox="0 0 24 24"><use href="#adv1"/><use href="#badge" x="14" y="14" width="10" height="10"/></symbol>
<symbol id="adv3" viewBox="0 0 24 24"><use href="#blob"/><circle cx="7" cy="6" r="4" fill="#999" stroke="#555" stroke-dasharray="1.500 1"/></symbol>
<symbol id="adv4" viewBox="0 0 24 24"><path d="M1 3l4 18L13 7l8-5M5 21l4-10h7" fill="none" stroke="#9a9" stroke-width="2"/><path d="M14 13h10v10H14z" fill="#bbc" stroke="#889"/><circle cx="19" cy="18" r="3" fill="#fff" stroke="#667"/></symbol>
<symbol id="advj" viewBox="0 0 24 24"><path d="M1 4q5-4 10 0t11-1v12H13l-6 4-5-5z" fill="#ccccc4" stroke="#888"/><path d="M22 13q-3 0-3 4v3q0 4-3 3" fill="none" stroke="#333" stroke-width="1.500"/></symbol>
<symbol id="advd" viewBox="0 0 24 24"><path d="M1 4q5-4 10 0t11-1v10q-8-1-11 4l-8 4-2-5z" fill="#ccccc4" stroke="#888"/><text x="16" y="23" font-family="Liberation Serif" font-size="14" fill="#333">d</text></symbol>
<symbol id="advk" viewBox="0 0 24 24"><path d="M2 7l7-6 5 8-8 7zM10 14l8-10 5 9-8 10z" fill="#aaa99a"/><path d="M14 1L7 22" stroke="#888"/></symbol>
<symbol id="loc" viewBox="0 0 24 24"><circle cx="10" cy="9" r="6.500" fill="none" stroke="#888" stroke-width="2"/><path d="M14 15l7 7" stroke="#888" stroke-width="2.500"/></symbol>
<symbol id="mouse" viewBox="0 0 24 24"><path d="M3 5c2-5 7-4 9 1l7 9c3 7-5 9-8 3z" fill="#8a8a8a" stroke="#222" stroke-width="1.500"/><path d="M13 8l4-5M18 10l4-5M6 3l6 11M3 19l5 3M2 14l4-1" stroke="#222" stroke-width="1.500"/><circle cx="16" cy="18" r="4" fill="#ddd" stroke="#222"/></symbol>
<symbol id="lock" viewBox="0 0 24 24"><path d="M7 11V7q0-5 5-5t5 5v4" fill="none" stroke="#555" stroke-width="2.500"/><rect x="4" y="10" width="16" height="13" rx="2" fill="#555"/></symbol>
<symbol id="crs" viewBox="0 0 24 24"><circle cx="12" cy="12" r="10" fill="#888" stroke="#555"/><path d="M1 12h22M12 1v22M4 6h16M4 18h16M12 2q-11 10 0 20M12 2q11 10 0 20" stroke="#e8e8e8" fill="none"/></symbol>
<symbol id="bubble" viewBox="0 0 24 24"><path d="M12 2c14 0 15 13 7 17l2 5-7-4C-4 21-3 2 12 2z" fill="#4e4e4e"/><path d="M6 11h3M11 11h3M16 11h3" stroke="#fff" stroke-width="2.500"/></symbol>
</svg>

<div class="window">
<header class="titlebar"><h1>*Untitled Project — QGIS [Bite-sized QGIS]</h1>
<div class="winbtns"><button class="min" aria-label="Minimize"></button><button class="max" aria-label="Maximize"></button><button class="x" aria-label="Close"><svg viewBox="0 0 10 10"><path d="M1.500 1.500l7 7M8.500 1.500l-7 7" stroke="#fff" stroke-width="2.500"/></svg></button></div></header>
<nav class="menubar"><a href="#">Pro<u>j</u>ect</a><a href="#"><u>E</u>dit</a><a href="#"><u>V</u>iew</a><a href="#"><u>L</u>ayer</a><a href="#"><u>S</u>ettings</a><a href="#"><u>P</u>lugins</a><a href="#">Vect<u>o</u>r</a><a href="#"><u>R</u>aster</a><a href="#"><u>D</u>atabase</a><a href="#"><u>W</u>eb</a><a href="#"><u>M</u>esh</a><a href="#">Pro<u>c</u>essing</a><a href="#"><u>H</u>elp</a></nav>
<div class="bar main-bar">
<i class="grip"></i>
<button class="t"><svg><use href="#new"/></svg></button><button class="t"><svg><use href="#open"/></svg></button><button class="t"><svg><use href="#save"/></svg></button><button class="t"><svg><use href="#layout"/></svg></button><button class="t"><svg><use href="#manager"/></svg></button><button class="t"><svg><use href="#style"/></svg></button>
<i class="grip"></i>
<button class="t on"><svg><use href="#hand"/></svg></button><button class="t"><svg><use href="#pan"/></svg></button><button class="t"><svg><use href="#zin"/></svg></button><button class="t"><svg><use href="#zout"/></svg></button><button class="t"><svg><use href="#zfull"/></svg></button><button class="t"><svg><use href="#zsel"/></svg></button><button class="t"><svg><use href="#zlay"/></svg></button><button class="t off"><svg><use href="#znat"/></svg></button><button class="t"><svg><use href="#zlast"/></svg></button><button class="t off"><svg><use href="#znext"/></svg></button><button class="t"><svg><use href="#mapview"/></svg></button><button class="t"><svg><use href="#bookmark"/></svg></button><button class="t"><svg><use href="#bookmarks"/></svg></button><button class="t"><svg><use href="#clock"/></svg></button><button class="t"><svg><use href="#refresh"/></svg></button>
<i class="grip"></i>
<button class="t"><svg><use href="#info"/></svg></button><button class="t"><svg><use href="#table"/></svg></button><button class="t"><svg><use href="#abacus"/></svg></button><button class="t"><svg><use href="#gear"/></svg></button><button class="t"><svg><use href="#sigma"/></svg></button><button class="t dd"><svg><use href="#measure"/></svg></button><button class="t"><svg><use href="#tip"/></svg></button><button class="t dd off"><svg><use href="#action"/></svg></button><button class="t dd"><svg><use href="#textnote"/></svg></button>
<i class="grip"></i>
<button class="t off"><svg><use href="#pencils"/></svg></button><button class="t"><svg><use href="#pencil"/></svg></button><button class="t off"><svg><use href="#saveed"/></svg></button><button class="t off"><svg><use href="#addpoly"/></svg></button><button class="t dd off"><svg><use href="#vertex"/></svg></button><button class="t off"><svg><use href="#modify"/></svg></button><button class="t off"><svg><use href="#trash"/></svg></button><button class="t off"><svg><use href="#cut"/></svg></button><button class="t off"><svg><use href="#copy"/></svg></button><button class="t off"><svg><use href="#paste"/></svg></button><button class="t off"><svg class="s20"><use href="#undo"/></svg></button><button class="t off"><svg class="s20"><use href="#redo"/></svg></button>
<i class="grip"></i>
<button class="t"><svg class="s22"><use href="#label"/></svg></button><button class="t"><svg><use href="#pie"/></svg></button><i class="vsep"></i><button class="t"><svg><use href="#labelpin"/></svg></button><button class="t"><svg class="s22"><use href="#labelred"/></svg></button><i class="vsep"></i>
<button class="t off"><svg><use href="#lg1"/></svg></button><button class="t off"><svg><use href="#lg2"/></svg></button><button class="t off"><svg><use href="#lg3"/></svg></button><button class="t off"><svg><use href="#lg4"/></svg></button><button class="t off"><svg><use href="#lg5"/></svg></button>
<i class="grip"></i><button class="t"><svg><use href="#osm"/></svg></button>
</div>
<div class="bar thin-bar"><i class="grip"></i></div>

<div class="work">
<aside class="vbar left">
<i class="hgrip"></i>
<button class="v"><svg><use href="#sources"/></svg></button><button class="v"><svg><use href="#gpkg"/></svg></button><button class="v"><svg><use href="#shp"/></svg></button><button class="v"><svg><use href="#feather"/></svg></button><button class="v"><svg><use href="#chip"/></svg></button>
<i class="hsep"></i><button class="v"><svg><use href="#virt"/></svg></button><i class="hsep"></i>
<i class="hgrip"></i><button class="v"><svg><use href="#plot"/></svg></button>
<i class="hgrip"></i><button class="v dd"><svg><use href="#select"/></svg></button><button class="v dd"><svg><use href="#selexp"/></svg></button><button class="v dd"><svg><use href="#desel"/></svg></button>
<i class="hgrip"></i><button class="v"><svg><use href="#python"/></svg></button><button class="v"><svg><use href="#angle"/></svg></button><button class="v"><svg><use href="#globe"/></svg></button><button class="v"><svg><use href="#stack"/></svg></button><button class="v"><svg><use href="#tear"/></svg></button>
<i class="hgrip"></i><button class="v"><svg><use href="#help"/></svg></button>
<i class="hgrip"></i><button class="v"><svg><use href="#tblref"/></svg></button>
</aside>

<section class="layers">
<div class="docktitle"><h2>Layers</h2><button><svg><use href="#float"/></svg></button><button><svg><use href="#close"/></svg></button></div>
<div class="ltools"><button class="on"><svg><use href="#brusho"/></svg></button><button><svg><use href="#addgrp"/></svg></button><button><svg><use href="#eye"/></svg></button><button><svg><use href="#funnel"/></svg></button><button class="dd"><svg><use href="#epsf"/></svg></button><button><svg><use href="#expand"/></svg></button><button><svg><use href="#collapse"/></svg></button><button><svg><use href="#remove"/></svg></button></div>
<div class="tree">
<div class="lyr sel"><i class="arr"></i><input type="checkbox" id="l1" checked><svg><use href="#poly"/></svg><label for="l1">cfr</label></div>
<div class="cls"><input type="checkbox" id="a1" checked><i class="sw g"></i><label for="a1">0 - 5</label></div>
<div class="cls"><input type="checkbox" id="a2" checked><i class="sw p1"></i><label for="a2">5 - 25</label></div>
<div class="cls"><input type="checkbox" id="a3" checked><i class="sw p2"></i><label for="a3">25 - 100</label></div>
<div class="lyr"><i class="arr"></i><input type="checkbox" id="l2" checked><svg><use href="#poly"/></svg><label for="l2">recovery_rate</label></div>
<div class="cls tall"><input type="checkbox" id="b1" checked><i class="sw g"></i><label for="b1">0 - 5</label></div>
<div class="cls tall"><input type="checkbox" id="b2" checked><i class="sw t1"></i><label for="b2">5 - 25</label></div>
<div class="cls tall"><input type="checkbox" id="b3" checked><i class="sw t2"></i><label for="b3">25 - 100</label></div>
</div>
<div class="docktabs"><button class="cur">Layers</button><button>Browser</button></div>
</section>
<i class="split"></i>
<main class="canvas">
<svg viewBox="431 117 958 866" role="img" aria-label="Map of the Philippines">
<defs><filter id="coast" x="0" y="0" width="1" height="1" color-interpolation-filters="sRGB"><feTurbulence type="fractalNoise" baseFrequency=".16" numOctaves="3" seed="4" result="n"/><feDisplacementMap in="SourceGraphic" in2="n" scale="6" xChannelSelector="R" yChannelSelector="G"/></filter></defs>
<g filter="url(#coast)">
<path d="M431 117h958v866h-958z" fill="#fff"/>
<g class="map" transform="translate(780 140) scale(.3333)">
<path class="g" d="M395 47l5-17 6 4-6 12zM402 107l6-4 4-10 12-12-8 14zM214 378l24-6 12-12 12 6 10 6-4 28-2 60-26 4-30 21-12-5v-40l12-30zM270 385l15-10 60 30 3 30-22 43 14 24-50 4-20-44-4-22zM192 470l14 2-6 53 10 23 22 32h10l-2 35h-20l-8 35-16-35-6-55 6-25-18-20 12-25zM290 508l55-6 31 28-4 20-14 10h-28l-30 17-32-9 8-38zM244 585l24-15 32 8 30-18 28 2v30l-28 4-58 9v20l-14 7-16-20zM262 662l56-8 12-9 6 20-2 40-14 7 2 28 20 22-24 24-14-44-46-7-16-23 16-22zM336 660h22l32 32 50-17-40 50-58 39-20-24-2-28 16-4zM440 676h22l-10 39-22 29 8-22-28 8-30 12-22 23 10 30-18 25-10 25-8 45h-10l6-60-10-44 27-24 55-35z"/>
<path class="b" d="M332 248l6 5 16-7 2 18-12 2zM410 222l13-4-3 14zM305 276l7 22-5 3zM312 327l30-8-2 7zM403 310l15-7 3 15-16 14zM272 370l8-8 13-2 17 6 35 16 27 22 36 9 17-3 22-25-2-15 17 8 11 24-7 23-16 13 2 20-5 22 3 41-74 5-31-26-19-22 4-18 15-20 3-30-13-12-35-14-15-9-13 9z"/>
<path class="t" d="M202 500l8-16 30-18 20-6 14 6v12l16 2 2 28-17 17-3 23-10 27-30 3-24-33v-15l-10-2zM222 618h20l16 17v55l-16 22-4 10-34-2-6-40 22-25zM90 705l20-10 8 20 2 20 30 13 30-10 10-16 55 2 13 14 2 22-10 20h-35l-25 10-25 18-15-28-32-2-26-16zM230 935l36-33 6-26 18-8 32 12 2 40-34 20-28 5z"/>
<path class="m" d="M272 606l48-4 15-8h23l5 24-28 14-17 20-56 10v-30l10-8z"/>
<path class="v" d="M376 526l74-4 12 30 26 4v24l14 8-12 47-24 37-26 3-50 17-32-32-30-20 12-12 22-8-2-60 16-25zM268 950l22-8 2 30 26 10 24-14 26 37-18 35-38 18-7-18-23-10 2-40-12 0z"/>
<path class="l" d="M174 630l14-12h14l6 32-10 30 2 35-12 5-12-30zM112 782l38-2 14 28-12 27 6 20 22 23 10 37-20 10-20 13-12-8-4-50-16-30-6-20 6-15zM165 808l20-18 30-15 23 37-2 30 6 23-62 15-28-25v-20zM216 776l34 6 12-44 40 4 26 84-2 34-4 18-37-10-45 4-4-30 2-30-16-14zM180 880l58-14 34 14-6 20-30 30-36-4-10-14z"/>
<path class="b" d="M292 940l32-16 18 42-12 14-12-2-26-8zM164 940l32-20 10 25 8 25-2 18-26-2-2-20-16-8z"/>
<path class="v" d="M338 872l12 18 12 35 16 23-10 12 4 30 16 38 52 37 26-5 24-24 55 16-45 10 2 48 22 40v22l-16 4-8-31-20-25-25-12-15-20-52-20-43 10-33-16 38-20 18-32-6-20-17-22-17-48v-30zM398 902l26-2-6 25 10 20-12 11-4-26-12-14zM414 1020l36 30-5 4-25-19zM455 1022l15 23-12-5zM442 930l22 11-10-2zM475 946l13 4-10 0z"/>
<path d="M302 980l8-4 2 22 8-18 6 8-2 20" fill="none"/>
<path class="l" d="M217 1022l43-36 20 6v38l-18 12-44-4zM218 1040l42 2 25-10 19 8 14 34 24 12-4 22-20 4-28-16-25-4-5-14-20-10-15 24-7-32zM512 1062l36-8 42 21 32-7-7-18 13-5 4 20 48 7 36 18-26 8h-30l-8 22 13 25-43 17-17-32-53-22-17-28zM622 1162l40-16v-16l28 25 2 20 18 13-20 12h-68zM700 1155l20 8 35 10-20-2zM262 1130l58 20 20 25 12 15-4 35 6 30-9 35-33 24-2-120-64-32z"/>
<path class="t" d="M174 1130l26-2 52 6-6 28 64 33v119l-25-4-20-30-20-40-2-35-13-25-35-30-19-8zM138 1076l27 12-5 6-15-6zM108 1310l42 20 22 10-4 15-38-5z"/>
<path class="g" d="M480 1035l5-23 25-7 35 5 30 25 10 37-37-17-58-21zM398 1135l17-10 27 10-2 20-15 15-23-12zM750 1045l20 5 10 10v45l-25 15-20-15 15-20-5-25zM650 1205h40l20-10h38l-3 65-10 12-27-14-4-23 8-20h-42zM568 1188l12-2 32 36-12-2-25-15zM612 1268l18 17 20-7 15 22 50 30 17 45 3 5-15-4-30-16-35-42-15 2-42 45 22-50zM668 1255l22 30v13l-18-23zM430 1262l12-2-4 40-14 28-8-20zM492 1288l30-6 4 18-11 8zM465 1265l5 13-4-2z"/>
</g>
<g class="map" transform="translate(650 540) scale(.3333)">
<path class="t" d="M498 108l22 17 25 10 17 7-4 13-43-7-13-20zM498 162l22 18-6 20-14-20zM476 238l20-4-8 8zM435 242l13 16-8 32 2 35 10 20 16 31-28 19-35 17-10 33-65 17-5 18v20l-25 40-35 35-33 7-17 38-40 30-35 10v15l-28 10-18 13 11-33 30-35 30-35 35-27 32-16 38-42 40-40 15-20 20-25 33-30 37-25 3-25-16-25 6-2 22 22-2-15-13-15 13-12 2-36zM480 370l32-2-12 12-15 5zM58 760l10-16 7 6-1 30-8 5zM104 708l13 0-5 18zM666 324l9 0-6 8zM450 288l8 8-7 4z"/>
<path class="g" d="M648 1058l32-14 15 11 30 3-15 12-20-6-35 4zM480 1195l40-27 28-10 4 14-32 8-30 10zM434 1222l5 18-6 15zM592 1017l10-19-2 20zM786 960l29-15 15 13 32 4-20 10-2 16-25 2-17-15zM279 902l14-2-4 10zM630 1125l12-6 6 8-8 4zM638 1104l16-6-8 8zM686 1078l10 4-6 6zM484 1218l8 4-3 8z"/>
</g>
<g class="map" transform="translate(890 460) scale(.3333)">
<path class="b" d="M78 412l12-2 40 15 20 20 26 19-21 11-25 19-8-9-4-45-38-16z"/>
<path class="l" d="M78 425l32 5 8 55 10 35 14 25-17 25-21 22-12 36-8-6 4-32 14-30 3-60 3-60zM128 496l47-18 30-22 50 14-15 25-25 20h-80z"/>
<path class="v" d="M130 525l15-10 70 3 20-18 27-30 2 25-14 25-38 25-4 25-23 18-50 4-35 28 10-30 32-42zM240 560l35-15 50 15v25l-7 20-23 27h-25l5 18-35 55-50 70-30-30-5-45h35l32-15-2-65 10-20zM265 634l30 2-10 44-17 25v40l17 35 5 20-12 30-33 5-15-10-5-30-35-17 50-70 38-53zM400 505l-8 25 8 30-2 70-28 20-30 35-10 35-30 58h-10l15-83 15-25 30-60 25-20 10-70zM350 502l10 20-10-2zM438 606l17-14 17 2-10 8z"/>
<path class="t" d="M365 718l35-20 10-23 30-3 35 13 5 35-25 20-15 15-65-5zM358 758l12-7 4 2-8 6zM490 812l12-6 14 20-11 4zM440 462l18 20 17 8 10 8 50-16 13 18-3 60 17 40-32 25-18 37-7-37 10-20v-33l-30-32-15 20-14-5-1-50zM452 355l23-7 25 10 25 7 43-10-6 40 18 5 6 40-8 40 2 45-35-25-10-30-15-15 28-20-28-25-30-25-25-10z"/>
<path class="m" d="M438 310l52 10 50-8h35l17 23-17 15h-15l-35 14-20-14h-55zM416 328l8 2-4 6zM548 294l8 6-4 6z"/>
<path class="g" d="M172 605l18-20 12 10-4 20-18 13zM313 817l25-14 10 24zM452 445l18-5 16 25-16 5zM568 345h17l30 15-10 20 7 50-4 25 14 35 13 5-10 30-37-5-2-80-6-40-18-8zM565 605l15 45-30 5-8 30-30-20 18-35zM558 668l28 40-16-17zM628 640l19-10-7 35 5 15-10 40-13-58zM698 686l20 38-24 4zM644 575l22 10-16 4zM684 733l7 16-6 4zM608 730l17 10 50 28-15 12-48-4-6-26zM680 772l25 33 17-5 3 20 17 40-12 30h-35l-15-45-20-30v-20zM645 890l3-40 12-32 20 27 15 47 25 16 30 17-15 25 25-2-15 42-45 10-95-4-7-36-16-62zM430 1080l35-20-10 40-15 20zM400 1125l25-7 55 32 20-30 12 10 8 50h-40l-10 5-78-5zM402 1186l68 2 22-23 13 25 65-5 2 30h-52l-20-15-12 25 2 13-45 12-15 15-28-45zM432 1255l83 41 43 4-6 15-32-7-80-40zM560 1235l25 10 25 3 15 32-20 75-30-30 13-25-6-40zM650 998h70l20 62v45l-50 25-15-30 5-40 4-35-14 15-15-15zM720 996l25 4 33 40 4 60-22 40-25 15-13 85-14-55v-25l-18-28 50-27-2-50zM310 890l18 10v62h-53l-5 23-45 20-45 3-50 67-5 15-43 35 3-15 20-10 10-70 25-35 40-10 55-15 10-50 40-10zM130 1075l50-63 55-7 23 25-18 40-25 20 7-55-27-15-40 40-5 18z"/>
<path class="t" d="M614 780h41l3 35-13 35v40l-61 4-4-52 20 8 20-5 5-20zM520 910l62-2 2 32 16 25 8 80-26 10-2 20-45 7-20-24-40-83 10-25 33-18zM340 1015l35-43 57-7 6-20 40 5v25l-38-10-40 45-8 25-32-3zM575 1235l40-25 30 30 5 40-10 30-35 48-10-2 25-46 5-35-15-30zM605 998h43l7 32 13 15 16-20-2 45-17 25-25 15-18-5-2-45-36-2 24-13zM330 900l20-2 22 42v30l-27 20-15-5zM648 1118l15 12v28l-9-2zM596 1382l14 0-8 6zM420 1108l16 8-8 4z"/>
<path class="u" d="M515 845l30 15 12 12 15-2 4-35 4 73-60 0-8 22-32 20-42-8 7-32 20-5 25 23 18-13z"/>
<path class="l" d="M400 1015l38-50 37 10 35 75-45-5-35 35-38-38zM470 1048l45 7 20 27 47-17 8 75-25 40-45-2-5-38-12-14-23 19-30-35z"/>
<path class="b" d="M505 1200l17 15 50 3-12 27 22 15-2 15-15 5-7 18-43-6-75-42 52-10-2-28z"/>
<path class="v" d="M584 1060h36l5 45 15 15-35 45v60l-30 5-7-55 22-35zM275 962h50l3 23 14 15-7 20-20 10v15l-15 13 8 27-18-15-22-8-3-42-30-8 35-17zM130 1078l18 2-3 25-15 25-18 28-30-13v-17l33-8z"/>
</g>
</g>
</svg>
</main>
<i class="split wide"></i>

<section class="styling">
<div class="docktitle"><h2>Layer Styling</h2><button><svg><use href="#float"/></svg></button><button><svg><use href="#close"/></svg></button></div>
<div class="combo ic"><svg><use href="#poly"/></svg><select aria-label="Layer"><option>cfr</option></select></div>
<div class="stylerow">
<div class="sidetabs"><button class="cur"><svg><use href="#brush"/></svg></button><button><svg><use href="#label"/></svg></button><button><svg><use href="#abct"/></svg></button><button><svg><use href="#cube"/></svg></button><button><svg><use href="#forms"/></svg></button><button><svg><use href="#hist"/></svg></button></div>
<form class="form">
<div class="combo ic"><svg class="s16"><use href="#grad"/></svg><select aria-label="Renderer"><option>Graduated</option></select></div>
<div class="fr"><label class="lb" for="val">Value</label><div class="combo edit grow"><span class="num">1.2</span><select id="val"><option>cfr</option></select></div><button type="button" class="b eps">ε</button></div>
<div class="fr h22"><span class="lb">Symbol</span><button type="button" class="b pic grow"><i class="symbol"></i></button><button type="button" class="b drop"></button></div>
<div class="fr"><label class="lb" for="lf">Legend format</label><input class="tx grow" id="lf" type="text" value="%1 - %2" size="4"><div class="spin w106"><input type="text" value="Precision 4" aria-label="Precision"></div><input type="checkbox" id="trim" checked><label class="trim" for="trim">Trim</label></div>
<div class="fr h27"><span class="lb">Color ramp</span><button type="button" class="b pic grow"><i class="ramp"></i></button><button type="button" class="b drop"></button></div>
<div class="tabs"><button type="button" class="cur">Classes</button><button type="button">Histogram</button></div>
<div class="tablebox"><table>
<thead><tr><th class="c1">Symbol<i></i></th><th class="c2">Values</th><th>Legend</th></tr></thead>
<tbody>
<tr><td><input type="checkbox" aria-label="0 - 5" checked><i class="sw g"></i></td><td>0.000000 - 5.000000</td><td>0 - 5</td></tr>
<tr><td><input type="checkbox" aria-label="5 - 25" checked><i class="sw p1"></i></td><td>5.000000 - 25.000000</td><td>5 - 25</td></tr>
<tr><td><input type="checkbox" aria-label="25 - 100" checked><i class="sw p2"></i></td><td>25.000000 - 100.000000</td><td>25 - 100</td></tr>
</tbody></table></div>
<div class="fr sp"><label for="mode">Mode</label><div class="combo ic w194"><svg class="s16"><use href="#quant"/></svg><select id="mode"><option>Equal Count (Quantile)</option></select></div><span class="grow"></span><label for="ncl">Classes</label><div class="spin w78"><input id="ncl" type="text" value="3"></div></div>
<div class="fr"><button type="button" class="b w79">Classify</button><button type="button" class="b w27"><svg class="s16"><use href="#plus"/></svg></button><button type="button" class="b w27"><svg class="s16"><use href="#minus"/></svg></button><button type="button" class="b w79">Delete All</button><span class="grow"></span><button type="button" class="b adv">Advanced<i></i></button></div>
<div class="fr"><input type="checkbox" id="link" checked><label for="link">Link class boundaries</label></div>
<h3><i></i>Layer Rendering</h3>
<div class="group">
<div class="gr"><label class="gl" for="op">Opacity</label><input type="range" id="op" class="grow" min="0" max="100" value="100"><div class="spin w99"><input type="text" value="100.0 %" aria-label="Opacity percent"></div></div>
<div class="gr blend"><span class="gl">Blending mode</span><div class="bl"><label for="bm1">Layer</label><div class="combo"><select id="bm1"><option>Multiply</option></select></div></div><div class="bl"><label for="bm2">Feature</label><div class="combo"><select id="bm2"><option>Normal</option></select></div></div></div>
<div class="gr"><input type="checkbox" id="de"><label for="de">Draw effects</label><span class="grow"></span><button type="button" class="b mini"><svg class="s12 off"><use href="#star"/></svg></button></div>
<div class="gr"><input type="checkbox" id="cf"><label for="cf">Control feature rendering order</label><span class="grow"></span><button type="button" class="b mini sq"><svg class="s16 off"><use href="#sort"/></svg></button></div>
</div>
<div class="fr"><button type="button" class="b w24 or"><svg class="s14"><use href="#undo"/></svg></button><button type="button" class="b w24 gn"><svg class="s14"><use href="#redo"/></svg></button><span class="grow"></span><input type="checkbox" id="lu" checked><label for="lu">Live update</label><button type="button" class="b apply"><svg class="s16"><use href="#tick"/></svg>Apply</button></div>
</form>
</div>
</section>

<aside class="vbar right">
<i class="hgrip"></i>
<button class="v off"><svg><use href="#setsq"/></svg></button><button class="v dd off"><svg><use href="#r1"/></svg></button><button class="v off"><svg><use href="#r2"/></svg></button><button class="v off"><svg><use href="#r3"/></svg></button><button class="v off"><svg><use href="#r4"/></svg></button><button class="v off"><svg><use href="#r5"/></svg></button><button class="v off"><svg><use href="#r6"/></svg></button><button class="v off"><svg><use href="#r7"/></svg></button><button class="v off"><svg><use href="#r8"/></svg></button><button class="v off"><svg><use href="#r9"/></svg></button><button class="v off"><svg><use href="#r10"/></svg></button><button class="v off"><svg><use href="#r11"/></svg></button><button class="v off"><svg><use href="#r12"/></svg></button><button class="v off"><svg><use href="#r13"/></svg></button><button class="v off"><svg><use href="#r13"/></svg></button><button class="v off"><svg><use href="#r14"/></svg></button><button class="v off"><svg><use href="#r15"/></svg></button><button class="v dd off"><svg><use href="#r16"/></svg></button>
</aside>
</div>

<div class="bar low-bar">
<i class="grip"></i>
<button class="t on"><svg><use href="#magnet"/></svg></button><button class="t corner"><svg><use href="#snapv"/></svg></button><button class="t on corner"><svg><use href="#pts"/></svg></button>
<div class="spin w103"><input type="text" value="2" aria-label="Tolerance"></div><div class="combo w108"><select aria-label="Units"><option>px</option></select></div>
<button class="t"><svg><use href="#topo"/></svg></button><button class="t corner"><svg><use href="#foot"/></svg></button><button class="t"><svg><use href="#inter"/></svg></button><button class="t dd"><svg><use href="#bolt"/></svg></button><button class="t"><svg><use href="#trace"/></svg></button>
<i class="grip"></i>
<button class="t"><svg><use href="#db"/></svg></button><button class="t"><svg><use href="#ruler"/></svg></button><button class="t"><svg><use href="#antenna"/></svg></button><button class="t"><svg><use href="#pin"/></svg></button>
<i class="grip"></i>
<button class="t"><svg><use href="#search"/></svg></button><button class="t"><svg><use href="#paint"/></svg></button>
<i class="grip"></i>
<button class="t"><b class="k ad">AD</b></button><button class="t"><b class="k mo">MO</b></button><button class="t"><b class="k ro">RO</b></button>
<div class="spin w70 dis"><input type="text" value="0.0" aria-label="Rotation value" disabled></div>
<button class="t"><b class="k sc">SC</b></button><button class="t"><b class="k adj">ADJ</b></button><button class="t"><b class="k p2p">2P</b></button><button class="t"><b class="k tm">T-</b></button><button class="t"><b class="k tp">T+</b></button><button class="t"><b class="k ex">!!</b></button><button class="t"><b class="k un"><svg><use href="#undo"/></svg></b></button>
<i class="grip"></i>
<button class="t dd off"><svg><use href="#adv1"/></svg></button><button class="t off"><svg><use href="#adv2"/></svg></button><button class="t off"><svg><use href="#r13"/></svg></button><button class="t dd off"><svg><use href="#r14"/></svg></button><button class="t off"><svg><use href="#r5"/></svg></button><button class="t off"><svg><use href="#r2"/></svg></button><button class="t dd off"><svg><use href="#adv3"/></svg></button><button class="t dd off"><svg><use href="#r4"/></svg></button><button class="t dd off"><svg><use href="#r6"/></svg></button><button class="t off"><svg><use href="#r6"/></svg></button><button class="t dd off"><svg><use href="#adv4"/></svg></button><button class="t off"><svg><use href="#advj"/></svg></button><button class="t off"><svg><use href="#advd"/></svg></button><button class="t off"><svg><use href="#advj"/></svg></button><button class="t off"><svg><use href="#advk"/></svg></button>
</div>

<footer class="status">
<div class="locate"><svg><use href="#loc"/></svg><input type="text" placeholder="Type to locate (Ctrl+K)" aria-label="Locate"></div>
<span class="grow"></span>
<label for="co">Coordinate</label><input class="tx w90" id="co" type="text" value="130.86,12.29"><svg class="s20"><use href="#mouse"/></svg>
<label for="scl">Scale</label><div class="combo edit w97"><select id="scl"><option>1:7165939</option></select></div><svg class="s16 lock"><use href="#lock"/></svg>
<label for="mg">Magnifier</label><div class="spin w98"><input id="mg" type="text" value="100%"></div>
<label class="rot" for="ro">Rotation</label><div class="spin w94"><input id="ro" type="text" value="0.0 °"></div>
<input type="checkbox" id="re" checked><label for="re">Render</label>
<button class="crs"><svg><use href="#crs"/></svg>EPSG:4326</button><svg class="s16"><use href="#bubble"/></svg>
</footer>
</div>
</body>
</html>
```
FILE: styles.css
```css
* { box-sizing: border-box; }
body { margin: 0; background: #efefef; color: #1a1a1a; font: 13px/16px "DejaVu Sans", sans-serif; }
button, input, select { font: inherit; color: inherit; margin: 0; }
button { padding: 0; border: 0; background: none; }
i { font-style: normal; display: block; flex: none; }
.sprite { display: none; }
.grow { flex: 1; min-width: 0; }

.window { display: flex; flex-direction: column; min-height: 100vh; border: 1px solid #9a9a9a; }

.titlebar { display: flex; align-items: center; height: 37px; background: #363636; border-bottom: 1px solid #1d1d1d; position: relative; }
.titlebar h1 { flex: 1; margin: 0; text-align: center; color: #fff; font: bold 12px/16px "Noto Sans", sans-serif; }
.winbtns { position: absolute; right: 9px; display: flex; align-items: center; gap: 24px; }
.min { width: 8px; height: 3px; background: #fff; align-self: flex-end; margin-bottom: 5px; }
.max { width: 6px; height: 6px; border: 2px solid #fff; }
.x { width: 19px; height: 19px; border-radius: 50%; background: #f08423; display: grid; place-items: center; }
.x svg { width: 9px; height: 9px; }

.menubar { display: flex; gap: 15px; padding: 0 10px; height: 22px; align-items: center; border-bottom: 1px solid #d2d2d2; }
.menubar a { color: inherit; text-decoration: none; }
.menubar u { text-underline-offset: 2px; }

.bar { display: flex; align-items: center; background: linear-gradient(#fafafa, #ececec); border-bottom: 1px solid #b4b4b4; }
.main-bar { height: 39px; }
.thin-bar { height: 16px; }
.low-bar { height: 38px; }
.grip { width: 15px; height: 20px; flex: none; background: radial-gradient(#bdbdbd 1px, transparent 1px) 0 0 / 4px 4px content-box; padding: 0 4px; }
.thin-bar .grip { height: 14px; }
.bar .grip:first-child { margin-right: -3px; }
.low-bar .grip { width: 17px; }
.low-bar .grip:first-child { width: 15px; }
.vsep { width: 7px; height: 24px; border-left: 2px solid #d4d4d4; background-clip: content-box; margin-left: 3px; margin-right: -3px; }
.t { width: 33px; height: 31px; flex: none; display: flex; align-items: center; justify-content: center; position: relative; }
.t svg, .v svg { width: 24px; height: 24px; color: #8d8078; }
.t .s20 { width: 20px; height: 20px; }
.t .s22 { width: 22px; height: 22px; }
.on { background: #dcdcdc; border: 1px solid #a9a9a9; border-radius: 3px; }
.off svg, svg.off { opacity: .38; }
.t.dd { width: 46px; padding-right: 13px; }
.low-bar .dd { width: 45px; padding-right: 12px; }
.dd::after, .corner::after { content: ""; position: absolute; right: 3px; border: 5px solid transparent; border-top-color: #4a4a4a; border-bottom: 0; }
.corner::after { right: 1px; bottom: 4px; border-width: 4px 4px 0; }
.off.dd::after { opacity: .3; }

.work { flex: 1; display: flex; min-height: 0; }
.vbar { width: 51px; flex: none; padding-top: 1px; background: linear-gradient(90deg, #fbfbfb, #ededed); display: flex; flex-direction: column; align-items: center; }
.vbar.left { border-right: 1px solid #b8b8b8; margin-right: 1px; }
.vbar.right { border-left: 1px solid #b8b8b8; margin-left: 4px; }
.v { height: 32px; width: 46px; flex: none; display: flex; align-items: center; justify-content: center; position: relative; }
.v.dd { padding-right: 12px; }
.v.dd::after { right: 3px; border-width: 4px 4px 0; }
.hgrip { width: 18px; height: 8px; background: radial-gradient(#bdbdbd 1px, transparent 1px) 0 0 / 4px 4px; margin: 3px 0 1px; }
.v + .hgrip { margin-top: 6px; }
.hsep + .hgrip { margin-top: 6px; }
.hsep { width: 32px; height: 2px; background: #d6d6d6; margin: 3px 0; }

.docktitle { display: flex; align-items: center; gap: 2px; height: 20px; margin-top: 1px; }
.docktitle h2 { flex: 1; margin: 0; font-size: 13px; font-weight: normal; }
.docktitle button { width: 12px; height: 12px; display: flex; }
.docktitle svg { width: 12px; height: 12px; }

.layers { width: 371px; flex: none; display: flex; flex-direction: column; }
.layers .docktitle { padding: 0 1px 0 4px; }
.ltools { display: flex; align-items: center; gap: 2px; padding-left: 4px; height: 30px; padding-bottom: 1px; }
.ltools button { width: 23px; height: 23px; display: flex; align-items: center; justify-content: center; position: relative; }
.ltools button.dd { width: 36px; padding-right: 11px; }
.ltools .dd::after { right: 3px; border-width: 4px 4px 0; }
.ltools svg { width: 17px; height: 17px; }
.tree { flex: 1; background: #fff; border: 1px solid #aeaeae; }
.lyr { height: 20px; display: flex; align-items: center; padding-left: 6px; font-weight: bold; }
.lyr .arr { border: 4px solid transparent; border-top: 5px solid #555; border-bottom: 0; margin-right: 9px; }
.lyr svg { width: 16px; height: 16px; margin: 0 6px; }
.lyr label { color: #111; }
.sel { background: #308cc6; height: 19px; }
.sel label { color: #fff; text-decoration: underline; text-underline-offset: 2px; }
.sel .arr { border-top-color: #1c4d6c; }
.cls { height: 19px; display: flex; align-items: center; padding-left: 43px; }
.tall { height: 20px; }
.cls .sw { margin: 0 6px; }
.sw { width: 17px; height: 17px; border: 1px solid; }
.sw.g { background: #e8e8e8; border-color: #f2f2f2; }
.sw.p1 { background: #dfafd6; border-color: #ecd0e7; }
.sw.p2 { background: #be64ac; border-color: #d294c6; }
.sw.t1 { background: #ace4e4; border-color: #cdefef; }
.sw.t2 { background: #5ac8c8; border-color: #8cd9d9; }
input[type=checkbox] { appearance: none; width: 14px; height: 14px; flex: none; background: #fff; border: 1px solid #b0b0b0; position: relative; }
input[type=checkbox]:checked::after { content: ""; position: absolute; inset: 1px; background: #111; clip-path: polygon(0 45%, 20% 40%, 40% 68%, 82% 0, 100% 2%, 50% 100%, 32% 100%); }
.docktabs { display: flex; height: 28px; margin-top: 1px; border-top: 1px solid #b4b4b4; align-items: flex-start; }
.docktabs button { height: 24px; width: 78px; border: 1px solid #b4b4b4; border-top: 0; background: #dedede; border-radius: 0 0 3px 3px; }
.docktabs .cur { height: 26px; width: 67px; background: #f6f6f6; }

.split { width: 6px; background: radial-gradient(#c4c4c4 1px, transparent 1px) 0 0 / 4px 4px no-repeat center; }
.split.wide { width: 9px; }
.canvas { flex: 1; min-width: 0; background: #fff; border: 1px solid #b0b0b0; margin-top: 1px; display: flex; position: relative; }
.canvas svg { position: absolute; width: 100%; height: 100%; }
.map path { stroke: #fff; stroke-width: 2; stroke-linejoin: round; }
.map .g { fill: #d3d3d3; }
.map .b { fill: #4f8aa9; }
.map .t { fill: #52b5b7; }
.map .l { fill: #9ccfd0; }
.map .v { fill: #979dc0; }
.map .m { fill: #ab599b; }
.map .u { fill: #7f5999; }

.styling { width: 467px; flex: none; display: flex; flex-direction: column; }
.styling .docktitle { padding-left: 1px; }
.styling > .combo { margin-top: 2px; }
.combo { position: relative; height: 24px; display: flex; align-items: center; }
.combo select { appearance: none; width: 100%; height: 24px; padding: 0 20px 0 4px; border: 1px solid #a8a8a8; border-radius: 3px; background: linear-gradient(#fff, #ededed); }
.combo::after { content: ""; position: absolute; right: 7px; border: 4px solid transparent; border-top: 5px solid #555; border-bottom: 0; pointer-events: none; }
.combo svg { position: absolute; left: 6px; width: 16px; height: 16px; }
.combo.ic select { padding-left: 24px; }
.edit select { background: linear-gradient(#a8a8a8, #a8a8a8) right 19px top / 1px 100% no-repeat #fff; }
.num { position: absolute; left: 3px; top: 3px; font: bold 10px/16px "DejaVu Sans", sans-serif; color: #777; }
.num + select { padding-left: 23px; }
.stylerow { flex: 1; display: flex; gap: 3px; margin-top: 8px; padding-bottom: 3px; }
.sidetabs { width: 38px; flex: none; background: #5c5c5c; display: flex; flex-direction: column; }
.sidetabs button { height: 32px; display: grid; place-items: center; }
.sidetabs .cur { background: #efefef; }
.sidetabs svg { width: 22px; height: 22px; }
.form { flex: 1; min-width: 0; display: flex; flex-direction: column; gap: 7px; }
.fr { display: flex; align-items: center; height: 24px; gap: 7px; }
.h22 { height: 22px; }
.h27 { height: 27px; }
.lb { width: 95px; flex: none; white-space: nowrap; }
.trim { margin-right: 7px; }
.b { height: 100%; border: 1px solid #a8a8a8; border-radius: 3px; background: linear-gradient(#fff, #ededed); display: flex; align-items: center; justify-content: center; flex: none; white-space: nowrap; }
.b.grow { flex: 1; }
.s12 { width: 12px; height: 12px; }
.s14 { width: 14px; height: 14px; }
.s16 { width: 16px; height: 16px; }
.s20 { width: 20px; height: 20px; }
.eps { width: 24px; font-size: 18px; color: #70407e; }
.pic { padding: 4px; }
.symbol { flex: 1; height: 12px; background: #f4a3b1; border: 1px solid #805b60; }
.ramp { flex: 1; height: 17px; background: linear-gradient(90deg, #fff, #f00); }
.b.drop { width: 12px; margin-left: -6px; }
.drop::after, .adv i { content: ""; border: 4px solid transparent; border-top: 4px solid #555; border-bottom: 0; }
.tx { height: 24px; border: 1px solid #a8a8a8; border-radius: 3px; background: #fff; padding: 0 3px; }
.spin { position: relative; height: 23px; flex: none; }
.spin input { width: 100%; height: 100%; border: 1px solid #a8a8a8; border-radius: 3px; padding: 0 16px 0 4px; background: linear-gradient(#b4b4b4, #b4b4b4) right 13px top / 1px 100% no-repeat #fff; }
.spin::before, .spin::after { content: ""; position: absolute; right: 4px; border: 3px solid transparent; }
.spin::before { top: 5px; border-bottom: 4px solid #555; border-top: 0; }
.spin::after { bottom: 5px; border-top: 4px solid #555; border-bottom: 0; }
.dis { opacity: .5; }
.w24 { width: 24px; } .w27 { width: 27px; } .w70 { width: 70px; } .w78 { width: 78px; } .w79 { width: 79px; }
.w90 { width: 90px; } .w94 { width: 94px; } .w97 { width: 97px; } .w98 { width: 98px; } .w99 { width: 99px; }
.w103 { width: 103px; } .w106 { width: 106px; } .w108 { width: 108px; } .w194 { width: 194px; }
.low-bar .w108 { margin: 0 2px 0 1px; }
.tabs { display: flex; height: 28px; align-items: flex-end; border-bottom: 1px solid #b4b4b4; }
.tabs button { width: 91px; height: 25px; background: #e6e6e6; border: 1px solid #b4b4b4; border-bottom: 0; border-radius: 3px 3px 0 0; }
.tabs .cur { width: 74px; height: 28px; margin-bottom: -1px; background: #fbfbfb; }
.tablebox { flex: 1; background: #fff; border: 1px solid #aeaeae; margin-top: 3px; }
table { width: 100%; border-collapse: collapse; table-layout: fixed; }
th { height: 21px; padding: 0 0 0 2px; text-align: left; font-weight: normal; background: linear-gradient(#fff, #ececec); border-bottom: 1px solid #aeaeae; border-right: 1px solid #cfcfcf; position: relative; }
th:last-child { border-right: 0; }
.c1 { width: 82px; } .c2 { width: 168px; }
th i { position: absolute; right: 4px; top: 8px; border: 3px solid transparent; border-bottom: 4px solid #555; border-top: 0; }
td { height: 18px; padding: 0 0 0 3px; white-space: nowrap; }
td:first-child { display: flex; align-items: center; gap: 6px; }
td .sw { width: 15px; height: 16px; }
.adv { width: 85px; gap: 5px; }
h3 { margin: 9px 0 0; font-size: 13px; line-height: 16px; display: flex; align-items: center; gap: 9px; padding-left: 2px; color: #111; }
h3 i { border: 6px solid transparent; border-top: 8px solid #333; border-bottom: 0; }
.group { border: 1px solid #d2d2d2; background: #ebebeb; margin-top: -4px; padding: 11px 6px 11px 2px; height: 148px; display: flex; flex-direction: column; justify-content: space-between; border-radius: 2px; }
.gr { display: flex; align-items: center; gap: 5px; }
.gl { width: 137px; flex: none; }
.blend { gap: 2px; align-items: center; }
.blend .gl { width: 141px; }
.bl { flex: 1; display: flex; flex-direction: column; gap: 2px; }
input[type=range] { appearance: none; height: 14px; background: none; margin-left: 2px; }
input[type=range]::-webkit-slider-runnable-track { height: 5px; background: #3ba0e0; border: 1px solid #22668f; border-radius: 2px; }
input[type=range]::-webkit-slider-thumb { appearance: none; width: 13px; height: 13px; margin-top: -5px; background: #fcfcfc; border: 1px solid #999; border-radius: 3px; }
.mini { width: 24px; height: 16px; }
.sq { height: 23px; }
.or { color: #e2763a; }
.gn { color: #6fb383; }
.apply { width: 80px; margin-left: 5px; }

.k { width: 24px; height: 24px; font-size: 11px; line-height: 24px; text-align: center; font-weight: bold; white-space: nowrap; }
.k.adj { font-size: 10px; }
.ad { background: #ffb9c6; color: #f31616; }
.mo { background: #dfe7df; color: #dcc8c8; }
.ro { background: #b4aab6; color: #cfc3c8; }
.sc { background: #d3d5c0; color: #a9aca0; }
.adj { background: #c6bcbc; color: #f1e8e8; }
.p2p { background: #ccd4d3; color: #d8c5ca; }
.tm { background: #f7f7f7; color: #888; }
.tp { background: #a2a2a2; color: #fff; }
.ex { background: #d3dbc8; color: #dfc0c0; }
.un { background: #b0b2ba; }
.un svg { color: #dfe3ea; }

.status { display: flex; align-items: center; gap: 5px; height: 31px; padding: 0 7px 0 4px; font-size: 11px; }
.status svg { flex: none; }
.locate { position: relative; width: 270px; font-size: 13px; }
.locate input { width: 100%; height: 24px; border: 1px solid #a8a8a8; border-radius: 3px; padding: 0 4px 0 28px; }
.locate input::placeholder { color: #8a8a8a; opacity: 1; }
.locate svg { position: absolute; left: 7px; top: 5px; width: 14px; height: 14px; }
.status .tx { height: 22px; text-align: center; }
.status .lock { margin: 0 2px 0 6px; }
.rot { margin: 0 4px; }
.crs { display: flex; align-items: center; gap: 3px; margin: 0 18px 0 10px; }
.crs svg { width: 16px; height: 16px; }
```
